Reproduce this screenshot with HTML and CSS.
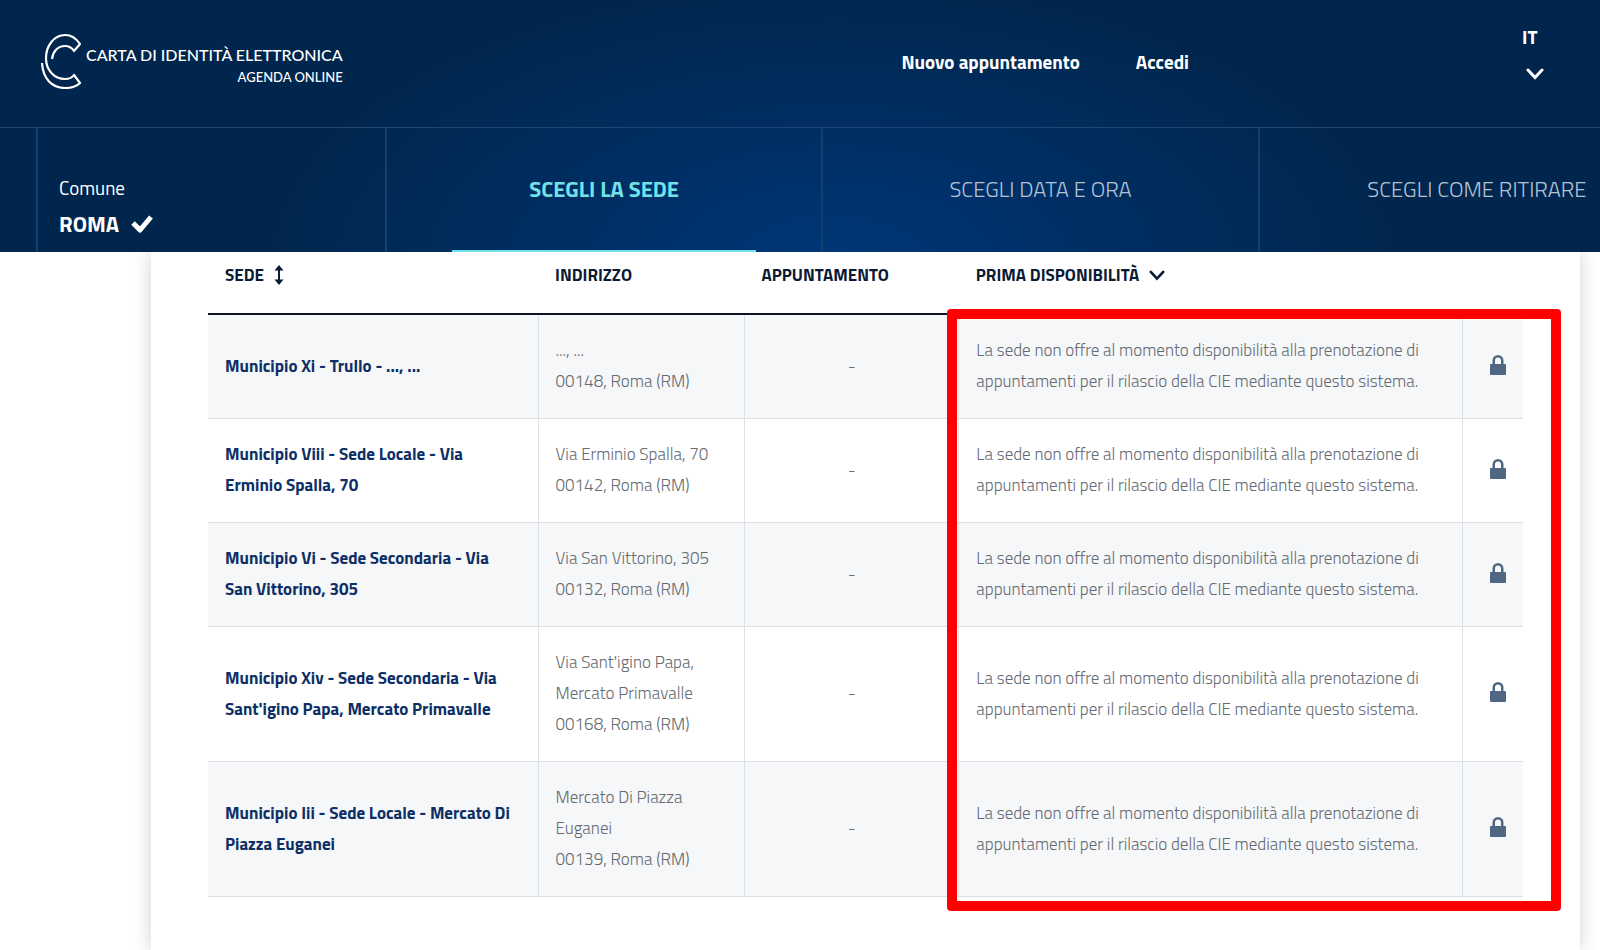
FILE: index.html
```html
<!DOCTYPE html>
<html lang="it">
<head>
<meta charset="utf-8">
<title>Carta di identità elettronica - Agenda online</title>
<meta name="viewport" content="width=device-width, initial-scale=1">
<link rel="stylesheet" href="styles.css">
</head>
<body>
<svg class="sprite" aria-hidden="true">
  <symbol id="lock" viewBox="0 0 16 20"><path fill="currentColor" fill-rule="evenodd" d="M2.500 9V5.500a5.500 5.500 0 0 1 11 0V9H15a1 1 0 0 1 1 1v9a1 1 0 0 1-1 1H1a1 1 0 0 1-1-1v-9a1 1 0 0 1 1-1zM5 9h6V5.500a3 3 0 0 0-6 0z"/></symbol>
  <symbol id="chevron" viewBox="0 0 18 12"><path fill="none" stroke="currentColor" stroke-width="3" stroke-linecap="round" d="M2 2l7 7.500L16 2"/></symbol>
</svg>
<header class="header">
  <div class="topbar">
    <a class="logo" href="#">
      <svg class="logo-mark" viewBox="0 0 42 56" fill="none" stroke="currentColor" stroke-width="2.200" stroke-linejoin="round">
        <path d="M12 26C13 18 18 13 25 13c4 0 7 2 9 5l6-7C36 5 31 2 25 2 14 2 6 13 6 25c0 12 8 21 19 21 4 0 7-1 9-4l6 8c-3 3-9 5-15 5C12 55 3 46 2 30"/>
      </svg>
      <span class="logo-text">
        <span class="logo-title">CARTA DI IDENTITÀ ELETTRONICA</span>
        <span class="logo-sub">AGENDA ONLINE</span>
      </span>
    </a>
    <nav class="nav">
      <a href="#">Nuovo appuntamento</a>
      <a href="#">Accedi</a>
    </nav>
    <button class="lang" type="button"><span>IT</span><svg class="chevron"><use href="#chevron"/></svg></button>
  </div>
  <ol class="steps">
    <li class="step step-done">
      <span class="step-label">Comune</span>
      <span class="step-value">ROMA <svg class="check" viewBox="0 0 22 18"><path fill="none" stroke="currentColor" stroke-width="5" stroke-linejoin="round" d="M2 8l7 7L20 2"/></svg></span>
    </li>
    <li class="step step-active">SCEGLI LA SEDE</li>
    <li class="step">SCEGLI DATA E ORA</li>
    <li class="step">SCEGLI COME RITIRARE</li>
  </ol>
</header>
<main class="panel">
  <div class="table-wrap">
    <table class="offices">
      <colgroup><col class="c-name"><col class="c-addr"><col class="c-app"><col class="c-avail"><col class="c-lock"></colgroup>
      <thead>
        <tr>
          <th scope="col"><button type="button" class="sort">SEDE <svg class="updown" viewBox="0 0 10 20"><path fill="none" stroke="currentColor" stroke-width="2" d="M5 3v14"/><path fill="currentColor" d="M5 0l4.500 5.500h-9zM5 20l4.500-5.500h-9z"/></svg></button></th>
          <th scope="col">INDIRIZZO</th>
          <th scope="col">APPUNTAMENTO</th>
          <th scope="col" colspan="2"><button type="button" class="sort">PRIMA DISPONIBILITÀ <svg class="sort-chevron"><use href="#chevron"/></svg></button></th>
        </tr>
      </thead>
      <tbody>
        <tr>
          <td class="name">Municipio Xi - Trullo - ..., ...</td>
          <td>..., ...<br>00148, Roma (RM)</td>
          <td class="dash">-</td>
          <td>La sede non offre al momento disponibilità alla prenotazione di<br>appuntamenti per il rilascio della CIE mediante questo sistema.</td>
          <td class="locked"><svg class="lock"><use href="#lock"/></svg></td>
        </tr>
        <tr>
          <td class="name">Municipio Viii - Sede Locale - Via<br>Erminio Spalla, 70</td>
          <td>Via Erminio Spalla, 70<br>00142, Roma (RM)</td>
          <td class="dash">-</td>
          <td>La sede non offre al momento disponibilità alla prenotazione di<br>appuntamenti per il rilascio della CIE mediante questo sistema.</td>
          <td class="locked"><svg class="lock"><use href="#lock"/></svg></td>
        </tr>
        <tr>
          <td class="name">Municipio Vi - Sede Secondaria - Via<br>San Vittorino, 305</td>
          <td>Via San Vittorino, 305<br>00132, Roma (RM)</td>
          <td class="dash">-</td>
          <td>La sede non offre al momento disponibilità alla prenotazione di<br>appuntamenti per il rilascio della CIE mediante questo sistema.</td>
          <td class="locked"><svg class="lock"><use href="#lock"/></svg></td>
        </tr>
        <tr>
          <td class="name">Municipio Xiv - Sede Secondaria - Via<br>Sant'igino Papa, Mercato Primavalle</td>
          <td>Via Sant'igino Papa,<br>Mercato Primavalle<br>00168, Roma (RM)</td>
          <td class="dash">-</td>
          <td>La sede non offre al momento disponibilità alla prenotazione di<br>appuntamenti per il rilascio della CIE mediante questo sistema.</td>
          <td class="locked"><svg class="lock"><use href="#lock"/></svg></td>
        </tr>
        <tr>
          <td class="name">Municipio Iii - Sede Locale - Mercato Di<br>Piazza Euganei</td>
          <td>Mercato Di Piazza<br>Euganei<br>00139, Roma (RM)</td>
          <td class="dash">-</td>
          <td>La sede non offre al momento disponibilità alla prenotazione di<br>appuntamenti per il rilascio della CIE mediante questo sistema.</td>
          <td class="locked"><svg class="lock"><use href="#lock"/></svg></td>
        </tr>
      </tbody>
    </table>
    <div class="highlight"></div>
  </div>
</main>
</body>
</html>
```
FILE: styles.css
```css
* { box-sizing: border-box; }
body {
  margin: 0;
  min-height: 100vh;
  display: flex;
  flex-direction: column;
  overflow: hidden;
  background: #fff;
  color: #656b73;
  font: 300 17px/31px "Titillium Web", Roboto, sans-serif;
}
a { color: inherit; text-decoration: none; }
button { padding: 0; border: 0; background: none; color: inherit; font: inherit; cursor: pointer; }
svg { display: block; }
.sprite { position: absolute; width: 0; height: 0; }

.header {
  position: relative;
  z-index: 1;
  color: #fff;
  background: radial-gradient(ellipse 560px 280px at 52% 106%, #003778 0%, #00306a 35%, #002c5c 65%, #00264d 100%);
}
.topbar {
  display: grid;
  grid-template-columns: 1fr auto 371px;
  height: 128px;
  padding: 0 40px;
  border-bottom: 1px solid #1f4670;
}
.logo { display: flex; align-self: start; gap: 4px; padding-top: 33px; }
.logo-mark { width: 42px; height: 56px; }
.logo-text {
  display: flex;
  flex-direction: column;
  align-items: flex-end;
  padding-top: 11px;
  font-family: Lato, sans-serif;
  font-weight: 500;
}
.logo-title { font-size: 16px; line-height: 22px; }
.logo-sub { font-size: 13px; line-height: 22px; }
.nav { display: flex; gap: 56px; padding-top: 46px; font-size: 19px; font-weight: 700; line-height: 32px; }
.lang {
  display: flex;
  flex-direction: column;
  justify-self: end;
  align-self: start;
  gap: 15px;
  padding: 21px 16px 0 0;
  font-size: 19px;
  font-weight: 700;
  line-height: 32px;
  text-align: left;
}
.chevron { width: 18px; height: 12px; margin-left: 4px; }

.steps { display: flex; height: 124px; margin: 0; padding: 0 0 0 36px; list-style: none; overflow: hidden; }
.step {
  display: flex;
  justify-content: center;
  align-items: center;
  flex: 0 0 27.9%;
  padding-bottom: 2px;
  border-left: 2px solid #14406f;
  color: #b3c3d6;
  font-size: 22px;
  line-height: 36px;
}
.step-done {
  flex-basis: 349px;
  flex-direction: column;
  justify-content: flex-end;
  align-items: flex-start;
  padding: 0 21px 10px;
  color: #fff;
}
.step-label { font-size: 19px; font-weight: 400; }
.step-value { display: flex; align-items: center; gap: 12px; font-weight: 700; }
.check { width: 22px; height: 18px; }
.step-active { position: relative; color: #72e2ea; font-weight: 700; }
.step-active::after { content: ""; position: absolute; bottom: 0; left: 15%; width: 70%; height: 2px; background: #72e2ea; }

.panel {
  flex: 1;
  margin: 0 20px 0 151px;
  padding: 0 57px;
  background: #fff;
  box-shadow: 0 0 18px rgba(0, 0, 0, .18);
}
.table-wrap { position: relative; }
.offices { width: 100%; border-collapse: collapse; table-layout: fixed; }
.c-name { width: 25.1%; }
.c-addr { width: 15.7%; }
.c-app { width: 16.3%; }
.c-lock { width: 60px; }
th {
  height: 62px;
  padding: 8px 17px 23px;
  border-bottom: 2px solid #0b1526;
  color: #0b1a35;
  font-size: 17px;
  font-weight: 700;
  line-height: 30px;
  text-align: left;
  white-space: nowrap;
}
.sort { display: flex; align-items: center; gap: 10px; }
.updown { width: 10px; height: 20px; }
.sort-chevron { width: 16px; height: 11px; }
td {
  padding: 20px 17px 21px;
  border-bottom: 1px solid #dcdfe3;
  border-left: 1px solid #dcdfe3;
  white-space: nowrap;
}
td:first-child { border-left: 0; }
tbody tr:nth-child(odd) { background: #f6f7f8; }
.name { color: #0d2f66; font-weight: 700; }
.dash { text-align: center; }
.locked { padding: 0 0 4px 10px; color: #506784; }
.lock { width: 16px; height: 20px; margin: 0 auto; }
.highlight {
  position: absolute;
  inset: 57px -38px -14px 739px;
  border: 10px solid #f00;
  border-radius: 4px;
  pointer-events: none;
}
```
